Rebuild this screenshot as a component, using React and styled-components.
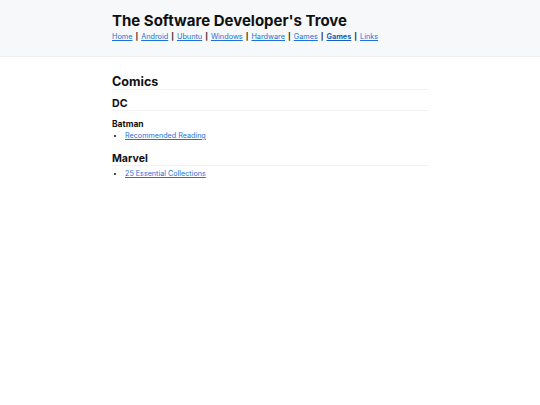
import React from "react";
import styled, { createGlobalStyle } from "styled-components";

const GlobalStyle = createGlobalStyle`
  html, body {
    margin: 0;
    padding: 0;
    background: #ffffff;
    font-family: Inter, "Noto Sans", sans-serif;
    color: #111111;
  }
`;

const StyledHeader = styled.header`
  background: #f6f8fa;
  border-bottom: 1px solid #eceef1;
  padding: 11px 0 14px;
`;

const Container = styled.div`
  width: 316px;
  margin: 0 auto;
`;

const SiteTitle = styled.h1`
  margin: 0 0 1px;
  font-size: 15px;
  font-weight: 700;
  line-height: 20px;
`;

const Nav = styled.nav`
  display: flex;
  align-items: center;
  gap: 3px;
  font-size: 7.3px;
  line-height: 10px;

  a {
    color: #1f72d8;
    text-decoration: underline;
  }

  a.active {
    font-weight: 700;
    color: #1a5fbd;
  }
`;

const Sep = styled.span`
  font-weight: 700;
  color: #222;
`;

const Main = styled.main`
  padding-top: 17px;
`;

const Heading = styled.h2`
  margin: ${(p) => p.$margin || "0"};
  font-size: ${(p) => p.$size}px;
  font-weight: 700;
  line-height: ${(p) => p.$lh}px;
  border-bottom: ${(p) => (p.$rule ? "1px solid #f1f2f4" : "none")};
`;

const List = styled.ul`
  margin: ${(p) => p.$top || 1}px 0 0;
  padding-left: 13px;
  font-size: 7.2px;
  line-height: 10px;

  a {
    color: #1f72d8;
  }
`;

const navItems = ["Home", "Android", "Ubuntu", "Windows", "Hardware", "Games", "Games", "Links"];

const App = () => {
  return (
    <>
      <GlobalStyle />
      <StyledHeader>
        <Container>
          <SiteTitle>The Software Developer's Trove</SiteTitle>
          <Nav>
            {navItems.map((item, i) => (
              <React.Fragment key={i}>
                {i > 0 && <Sep>|</Sep>}
                <a href="#" className={i === 6 ? "active" : ""}>
                  {item}
                </a>
              </React.Fragment>
            ))}
          </Nav>
        </Container>
      </StyledHeader>
      <Main>
        <Container>
          <Heading $size={12.6} $lh={15} $rule>Comics</Heading>
          <Heading $size={10.6} $lh={13} $rule $margin="7px 0 0">DC</Heading>
          <Heading as="h3" $size={8.5} $lh={11} $margin="8px 0 0">Batman</Heading>
          <List>
            <li><a href="#">Recommended Reading</a></li>
          </List>
          <Heading $size={10.6} $lh={13} $rule $margin="11px 0 0">Marvel</Heading>
          <List $top={3}>
            <li><a href="#">25 Essential Collections</a></li>
          </List>
        </Container>
      </Main>
    </>
  );
};

export default App;
